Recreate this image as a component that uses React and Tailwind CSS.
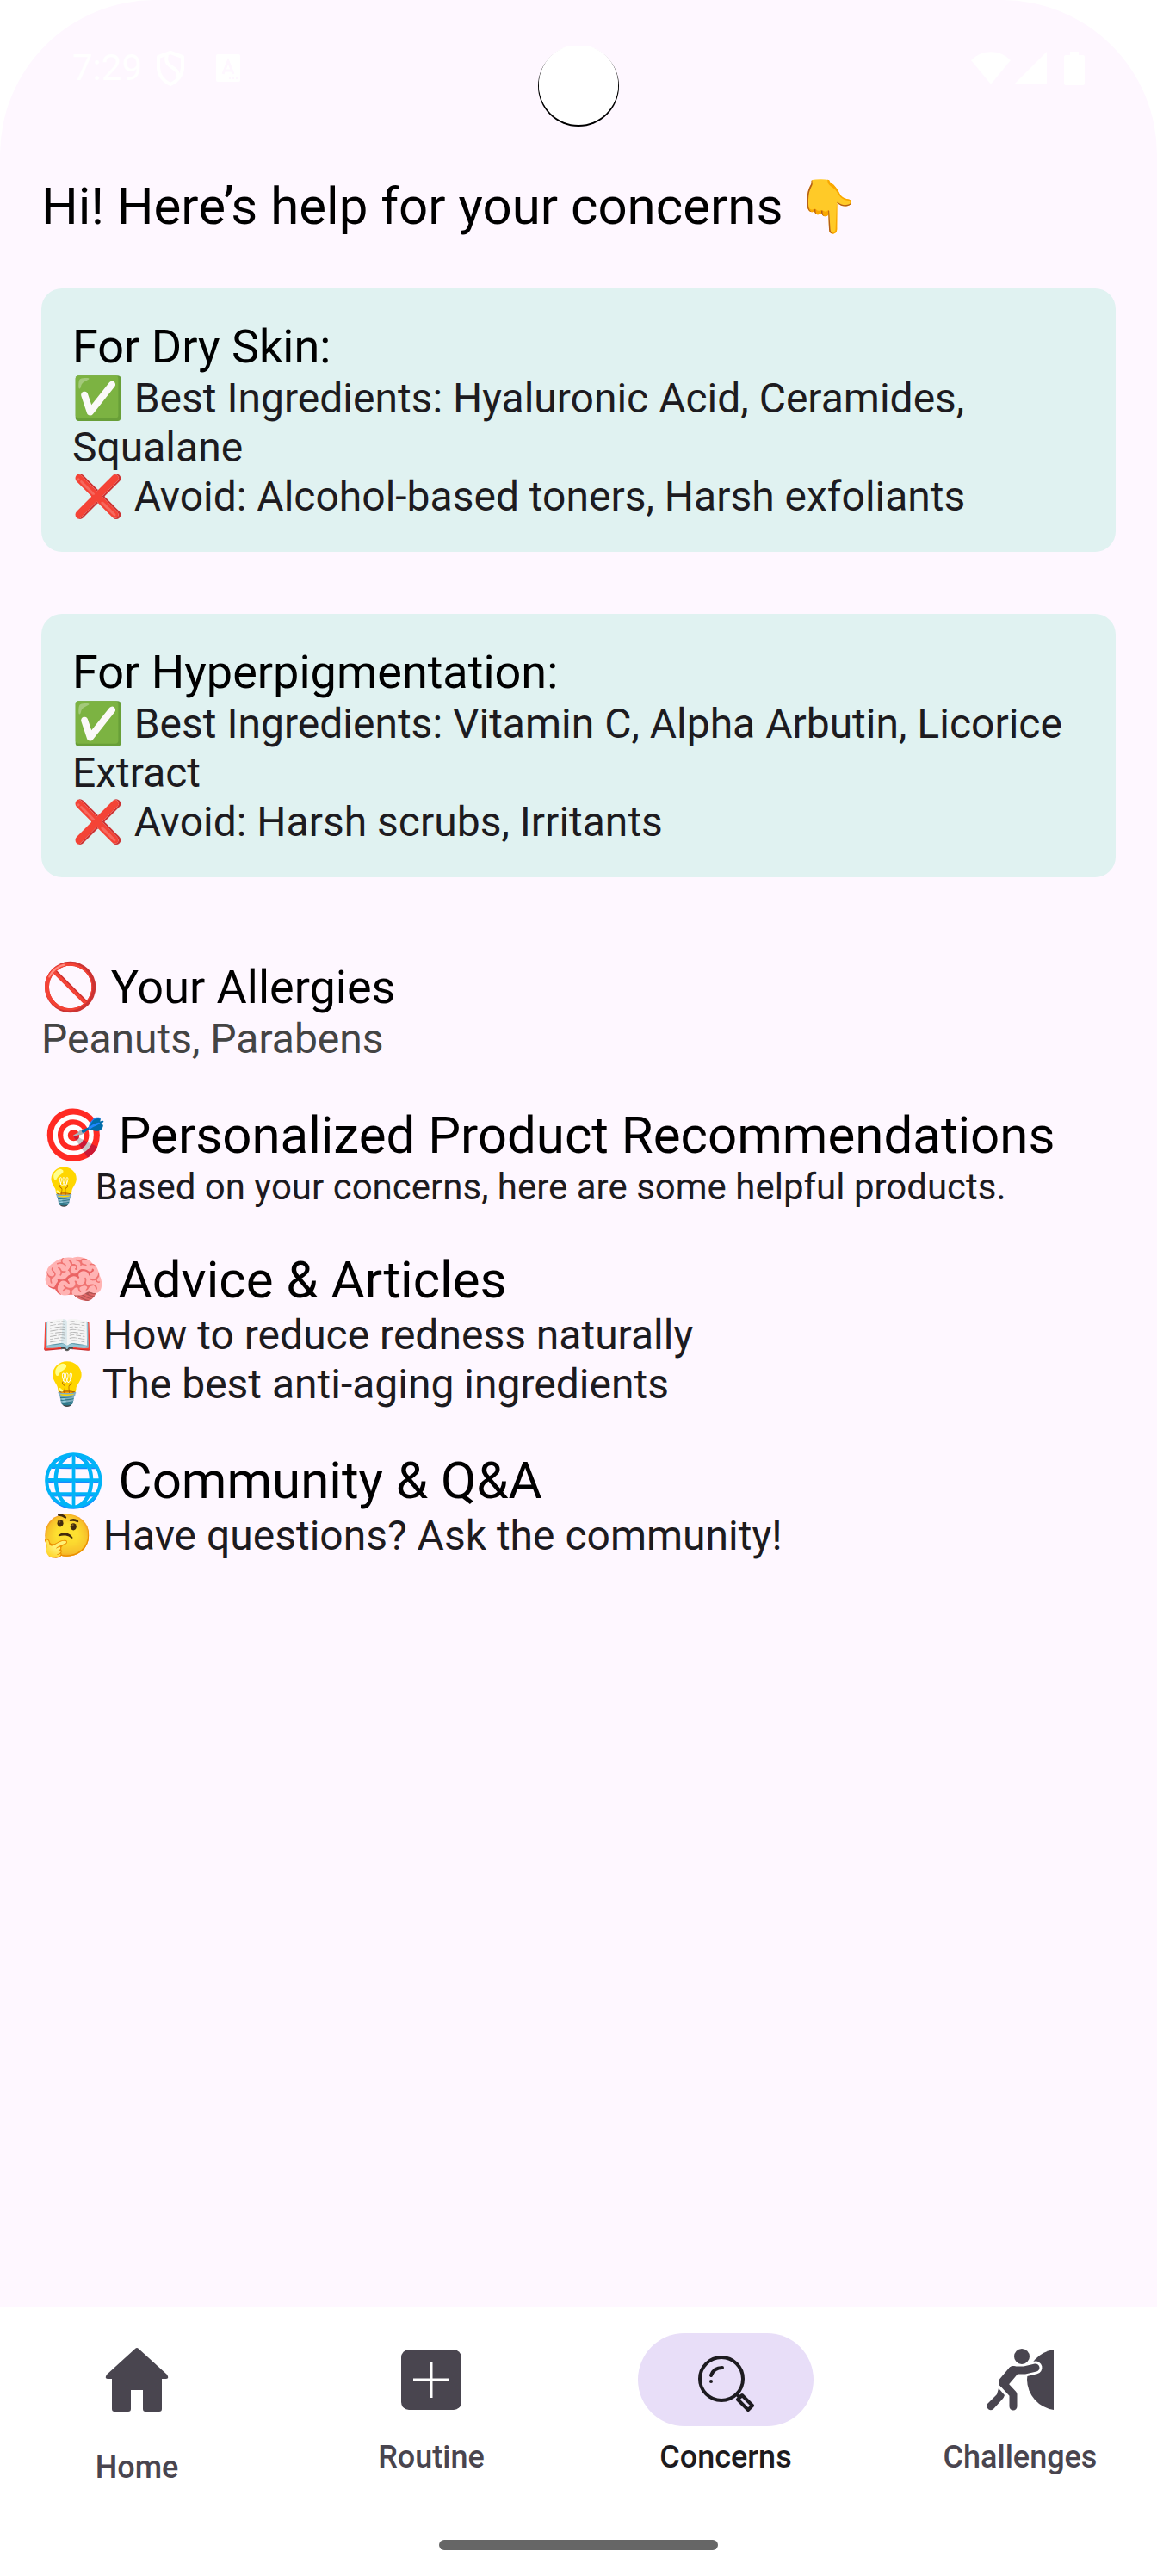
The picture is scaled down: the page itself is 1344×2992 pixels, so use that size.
const page = "font-[Roboto,'Noto_Color_Emoji',sans-serif]";

function ShieldIcon() {
  return (
    <svg viewBox="0 0 34 42" className="h-[42px] w-[34px]" fill="none" stroke="white" strokeWidth="4" strokeLinejoin="round" aria-hidden="true">
      <path d="M17 3 L31 8 V20 C31 29 25 36 17 40 C9 36 3 29 3 20 V8 Z" />
      <path d="M13 6 C8 22 28 18 26 32" />
    </svg>
  );
}

function CardIcon() {
  return (
    <svg viewBox="0 0 28 32" className="h-8 w-7" aria-hidden="true">
      <rect width="28" height="32" rx="2" fill="white" />
      <path d="M8 23 L14 8 L20 23 M10 19 H18" fill="none" stroke="#fef7ff" strokeWidth="3" />
      <path d="M15 28 h2 M19 28 h2 M23 28 h2" stroke="#fef7ff" strokeWidth="2" />
    </svg>
  );
}

function WifiIcon() {
  return (
    <svg viewBox="0 0 46 38" className="h-[38px] w-[46px]" fill="white" aria-hidden="true">
      <path d="M23 38 L0 10 C13 -3 33 -3 46 10 Z" />
    </svg>
  );
}

function SignalIcon() {
  return (
    <svg viewBox="0 0 38 38" className="h-[38px] w-[38px]" fill="white" aria-hidden="true">
      <path d="M38 0 V38 H0 Z" />
    </svg>
  );
}

function BatteryIcon() {
  return (
    <svg viewBox="0 0 24 39" className="h-[39px] w-6" fill="white" aria-hidden="true">
      <path d="M7 0 H17 V4 H22 Q24 4 24 6 V37 Q24 39 22 39 H2 Q0 39 0 37 V6 Q0 4 2 4 H7 Z" />
    </svg>
  );
}

function HomeIcon() {
  return (
    <svg viewBox="0 0 74 76" className="h-[76px] w-[74px]" fill="currentColor" aria-hidden="true">
      <path d="M35 2 Q37 0 39 2 L72 32 Q75 37 71 37 H66 V72 Q66 75 63 75 H47 Q44 75 44 72 V50 H30 V72 Q30 75 27 75 H11 Q8 75 8 72 V37 H3 Q-1 37 2 32 Z" />
    </svg>
  );
}

function RoutineIcon() {
  return (
    <svg viewBox="0 0 72 72" className="h-[72px] w-[72px]" aria-hidden="true">
      <rect x="1" y="1" width="70" height="70" rx="9" fill="currentColor" />
      <path d="M36 15 V57 M15 36 H57" stroke="white" strokeWidth="3" />
    </svg>
  );
}

function SearchIcon() {
  return (
    <svg viewBox="0 0 72 72" className="h-[72px] w-[72px] overflow-visible" fill="none" stroke="currentColor" strokeWidth="4" aria-hidden="true">
      <circle cx="31" cy="35" r="25" />
      <path d="M19 31 Q22 22 32 22" strokeLinecap="round" />
      <circle cx="19" cy="38" r="2" fill="currentColor" stroke="none" />
      <path d="M48 52 L52 56" />
      <path d="M50 59 L55 54 L67 66 L62 71 Z" strokeLinejoin="round" />
    </svg>
  );
}

function ChallengesIcon() {
  return (
    <svg viewBox="0 0 78 72" className="h-[72px] w-[78px]" aria-hidden="true">
      <path d="M78 1 A36 36 0 0 0 47 36 A36 36 0 0 0 78 71 Z" fill="currentColor" />
      <path d="M30 25 H44 L57 22" fill="none" stroke="white" strokeWidth="15" strokeLinecap="round" />
      <circle cx="41" cy="9" r="9" fill="currentColor" />
      <path d="M57 22 L44 25 H30" fill="none" stroke="currentColor" strokeWidth="9" strokeLinecap="round" strokeLinejoin="round" />
      <path d="M31 26 L20 39" fill="none" stroke="currentColor" strokeWidth="12" strokeLinecap="round" />
      <path d="M19 40 L31 53 V67" fill="none" stroke="currentColor" strokeWidth="9" strokeLinecap="round" strokeLinejoin="round" />
      <path d="M14 46 L21 54 Q20 57 18 59 L8 70 Q4 73 1 69 Q-1 66 1 64 L12 53 Z" fill="currentColor" />
    </svg>
  );
}

function CameraCutout() {
  return (
    <svg viewBox="0 0 94 94" className="mt-[53px] size-[94px]" aria-hidden="true">
      <circle cx="47" cy="47" r="47" fill="black" />
      <circle cx="47" cy="46" r="46" fill="white" />
      <circle cx="47" cy="45" r="46" fill="white" />
    </svg>
  );
}

const concerns = [
  { title: "For Dry Skin:", best: "Hyaluronic Acid, Ceramides, Squalane", avoid: "Alcohol-based toners, Harsh exfoliants" },
  { title: "For Hyperpigmentation:", best: "Vitamin C, Alpha Arbutin, Licorice Extract", avoid: "Harsh scrubs, Irritants" },
];

const tabs = [
  { label: "Home", Icon: HomeIcon, tall: true },
  { label: "Routine", Icon: RoutineIcon },
  { label: "Concerns", Icon: SearchIcon, active: true },
  { label: "Challenges", Icon: ChallengesIcon },
];

function StatusBar() {
  return (
    <header className="grid h-[156px] grid-cols-[1fr_auto_1fr] items-start text-white">
      <div className="flex h-[106px] items-center pt-[52px] pl-[84px]">
        <span className="text-[42px] leading-[54px]">7:29</span>
        <span className="ml-4"><ShieldIcon /></span>
        <span className="ml-9"><CardIcon /></span>
      </div>
      <CameraCutout />
      <div className="flex h-[106px] items-center justify-end pt-[52px] pr-[84px]">
        <WifiIcon />
        <span className="ml-1"><SignalIcon /></span>
        <span className="ml-5"><BatteryIcon /></span>
      </div>
    </header>
  );
}

export default function App() {
  return (
    <div className={`${page} bg-white`}>
      <div className="flex min-h-screen flex-col rounded-t-[180px] bg-[#fef7ff] text-[48px] leading-[57px] text-[#1d1b20]">
        <StatusBar />
        <main className="flex grow flex-col gap-12 px-12 pt-12">
          <h1 className="text-[60px] leading-[71px] text-black">Hi! Here’s help for your concerns 👇</h1>
          <div className="mt-3 mb-12 flex flex-col gap-[72px]">
            {concerns.map((c) => (
              <section key={c.title} className="rounded-3xl bg-[#e0f2f1] p-9">
                <h2 className="text-[54px] leading-[63px] text-black">{c.title}</h2>
                <p>{`✅ Best Ingredients: ${c.best}`}</p>
                <p>{`❌ Avoid: ${c.avoid}`}</p>
              </section>
            ))}
          </div>
          <section>
            <h2 className="text-[54px] leading-[63px] text-black">🚫 Your Allergies</h2>
            <p className="text-[#444444]">Peanuts, Parabens</p>
          </section>
          <section>
            <h2 className="text-[60px] leading-[71px] text-black">🎯 Personalized Product Recommendations</h2>
            <p className="text-[42px] leading-[49px]">💡 Based on your concerns, here are some helpful products.</p>
          </section>
          <section>
            <h2 className="text-[60px] leading-[71px] text-black">🧠 Advice &amp; Articles</h2>
            <p>📖 How to reduce redness naturally</p>
            <p>💡 The best anti-aging ingredients</p>
          </section>
          <section>
            <h2 className="text-[60px] leading-[71px] text-black">🌐 Community &amp; Q&amp;A</h2>
            <p>🤔 Have questions? Ask the community!</p>
          </section>
        </main>
        <footer className="bg-white pb-[30px]">
          <nav className="grid h-60 grid-cols-4 gap-6">
            {tabs.map(({ label, Icon, tall, active }) => (
              <button
                key={label}
                type="button"
                aria-current={active ? "page" : undefined}
                className={`flex flex-col items-center gap-3 text-[36px] leading-[48px] font-medium ${tall ? "pt-[18px]" : "pt-[30px]"} ${active ? "text-[#1d1b20]" : "text-[#49454f]"}`}
              >
                <span className={`flex w-[204px] items-center justify-center rounded-full ${tall ? "h-[132px]" : "h-[108px]"} ${active ? "bg-[#e8def8]" : ""}`}>
                  <Icon />
                </span>
                {label}
              </button>
            ))}
          </nav>
          <div className="mx-auto mt-[30px] h-3 w-[324px] rounded-full bg-[#666666]" />
        </footer>
      </div>
    </div>
  );
}
